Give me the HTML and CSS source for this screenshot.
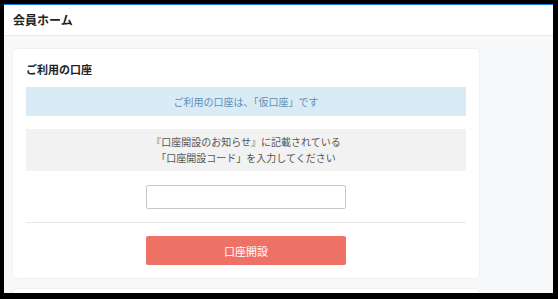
FILE: index.html
```html
<!DOCTYPE html>
<html lang="ja">
<head>
    <meta charset="UTF-8">
    <meta name="viewport" content="width=device-width, initial-scale=1.0">
    <title>会員ホーム</title>
    <link rel="stylesheet" href="styles.css">
</head>
<body>
    <div class="screen">
        <header class="page-header">
            <h1>会員ホーム</h1>
        </header>

        <main class="content">
            <section class="card">
                <h2>ご利用の口座</h2>
                <div class="notice">ご利用の口座は、「仮口座」です</div>
                <div class="guide">
                    『口座開設のお知らせ』に記載されている<br>
                    「口座開設コード」を入力してください
                </div>
                <div class="form-row">
                    <input type="text" class="code-input">
                </div>
                <hr class="divider">
                <div class="form-row">
                    <button class="open-button">口座開設</button>
                </div>
            </section>

            <section class="card"></section>
        </main>
    </div>
</body>
</html>
```

FILE: styles.css
```css
html, body {
    margin: 0;
    padding: 0;
    background: #000;
    height: 299px;
    overflow: hidden;
}
body {
    font-family: "Noto Sans CJK JP", "Noto Sans", sans-serif;
    color: #333;
    padding: 4px 0 0 4px;
    box-sizing: border-box;
}
.screen {
    width: 549px;
    height: 289px;
    overflow: hidden;
    background: #f8f9fb;
    border-top: 1px solid #1a7be0;
    box-sizing: border-box;
}
.page-header {
    background: #fff;
    height: 30px;
    border-bottom: 1px solid #e6e8ea;
    display: flex;
    align-items: center;
    padding-left: 9px;
}
.page-header h1 {
    margin: 0;
    font-size: 12px;
    font-weight: bold;
    line-height: 14px;
    color: #222;
}
.content {
    padding: 13px 0 0 9px;
}
.card {
    width: 466px;
    box-sizing: border-box;
    background: #fff;
    border-radius: 3px;
    box-shadow: 0 0 2px rgba(0, 0, 0, 0.12);
    padding: 13px 13px 13px;
    margin-bottom: 11px;
}
.card h2 {
    margin: 0 0 11px;
    font-size: 11px;
    font-weight: bold;
    line-height: 14px;
    color: #222;
}
.notice {
    background: #d9ebf5;
    color: #5f8fb5;
    font-size: 10px;
    line-height: 29px;
    height: 29px;
    text-align: center;
}
.guide {
    background: #f2f2f2;
    color: #555;
    font-size: 10px;
    line-height: 16px;
    padding: 5px 0;
    margin-top: 13px;
    text-align: center;
}
.form-row {
    display: flex;
    justify-content: center;
}
.code-input {
    margin-top: 14px;
    width: 200px;
    height: 24px;
    box-sizing: border-box;
    border: 1px solid #c8c8c8;
    border-radius: 2px;
    padding: 0 6px;
}
.divider {
    border: none;
    border-top: 1px solid #e8e8e8;
    margin: 13px 0 13px;
}
.open-button {
    width: 200px;
    height: 29px;
    border: none;
    border-radius: 2px;
    background: #ee7166;
    color: #fff;
    font-family: inherit;
    font-size: 11px;
    cursor: pointer;
}
```
